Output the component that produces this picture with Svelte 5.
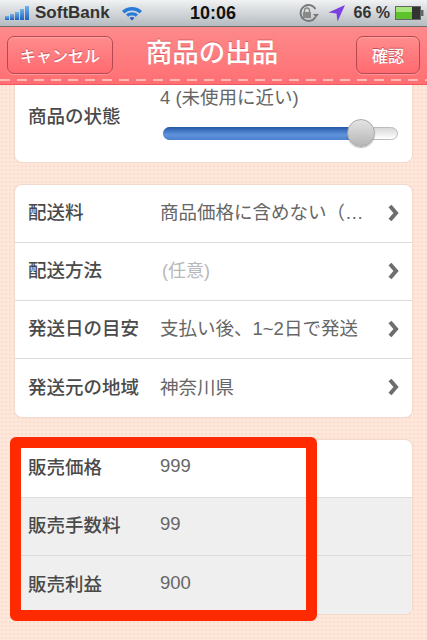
<script lang="ts">
	const shipping = [
		{ label: '配送料', value: '商品価格に含めない（…', muted: false },
		{ label: '配送方法', value: '(任意)', muted: true },
		{ label: '発送日の目安', value: '支払い後、1~2日で発送', muted: false },
		{ label: '発送元の地域', value: '神奈川県', muted: false }
	];
	const prices = [
		{ label: '販売価格', value: '999', grey: false },
		{ label: '販売手数料', value: '99', grey: true },
		{ label: '販売利益', value: '900', grey: true }
	];
</script>

<div class="screen">
	<div class="status">
		<div class="status-left">
			<svg class="signal" width="26" height="15" viewBox="0 0 26 15">
				<defs>
					<linearGradient id="sig" x1="0" y1="0" x2="0" y2="1">
						<stop offset="0" stop-color="#6fb4ea" />
						<stop offset="1" stop-color="#1f62c0" />
					</linearGradient>
				</defs>
				<rect x="0" y="10" width="4" height="4" fill="url(#sig)" />
				<rect x="5" y="8" width="4" height="6" fill="url(#sig)" />
				<rect x="10" y="6" width="4" height="8" fill="url(#sig)" />
				<rect x="15" y="3" width="4" height="11" fill="url(#sig)" />
				<rect x="20" y="0" width="4" height="14" fill="url(#sig)" />
			</svg>
			<span class="carrier">SoftBank</span>
			<svg class="wifi" width="22" height="16" viewBox="0 0 22 16">
				<path d="M1 6 C6 0.5 16 0.5 21 6 L18.5 8.5 C14.5 4.5 7.5 4.5 3.5 8.5 Z" fill="#2a7bd8" />
				<path d="M5 9.5 C8 6.5 14 6.5 17 9.5 L14.8 11.8 C12.8 10 9.2 10 7.2 11.8 Z" fill="#2a7bd8" />
				<path d="M8.6 13 C10 11.8 12 11.8 13.4 13 L11 15.6 Z" fill="#1d5fc0" />
			</svg>
		</div>
		<span class="clock">10:06</span>
		<div class="status-right">
			<svg width="24" height="20" viewBox="0 0 24 20">
				<path d="M19.5 14 A8 8 0 1 1 19.5 6" fill="none" stroke="#777" stroke-width="1.8" />
				<path d="M17 11 L23 11 L20 14.5 Z" fill="#777" />
				<rect x="7" y="9" width="8" height="6" fill="#888" />
				<path d="M8.5 9 V7.5 a2.5 2.5 0 0 1 5 0 V9" fill="none" stroke="#888" stroke-width="1.3" />
			</svg>
			<svg class="arrow" width="18" height="18" viewBox="0 0 18 18">
				<path d="M17 1 L0.5 8.5 L8.5 9.5 L9.5 17.5 Z" fill="#7c3ee0" />
			</svg>
			<span class="pct">66 %</span>
			<svg width="29" height="14" viewBox="0 0 29 14">
				<rect x="0.5" y="0.5" width="25" height="13" fill="#333" stroke="#666" />
				<rect x="1" y="1" width="16" height="12" fill="#5fc12c" />
				<rect x="1" y="1" width="16" height="5" fill="#a5e57a" />
				<rect x="26" y="4" width="2.5" height="6" fill="#666" />
			</svg>
		</div>
	</div>

	<header class="nav">
		<button class="nav-btn cancel">キャンセル</button>
		<h1>商品の出品</h1>
		<button class="nav-btn confirm">確認</button>
		<div class="stitch"></div>
	</header>

	<main class="content">
		<section class="card condition">
			<div class="label">商品の状態</div>
			<div class="condition-body">
				<div class="condition-value">4 (未使用に近い)</div>
				<div class="slider">
					<div class="slider-fill"></div>
					<div class="slider-knob"></div>
				</div>
			</div>
		</section>

		<section class="card">
			{#each shipping as row}
				<div class="row">
					<div class="label">{row.label}</div>
					<div class="value" class:muted={row.muted}>{row.value}</div>
					<svg class="chevron" width="13" height="18" viewBox="0 0 13 18">
						<path d="M3 2 L9 9 L3 16" fill="none" stroke="#6e6e6e" stroke-width="4" />
					</svg>
				</div>
			{/each}
		</section>

		<section class="card">
			{#each prices as row}
				<div class="row" class:grey={row.grey}>
					<div class="label">{row.label}</div>
					<div class="value">{row.value}</div>
				</div>
			{/each}
		</section>
	</main>

	<div class="annotation"></div>
</div>

<style>
	:global(body) {
		margin: 0;
	}

	.screen {
		position: relative;
		width: 427px;
		height: 640px;
		overflow: hidden;
		background-color: #fde6da;
		background-image: radial-gradient(#fbdccd 1px, transparent 1px);
		background-size: 4px 4px;
		font-family: 'Liberation Sans', 'Noto Sans CJK JP', sans-serif;
		color: #555;
	}

	.status {
		display: flex;
		align-items: center;
		justify-content: space-between;
		position: relative;
		height: 27px;
		padding: 0 3px 0 5px;
		box-sizing: border-box;
		background: linear-gradient(#f0f2f3, #b5bbc0);
		border-bottom: 1px solid #6d6d6d;
	}

	.status-left,
	.status-right {
		display: flex;
		align-items: center;
	}

	.carrier {
		margin-left: 4px;
		font-size: 17px;
		font-weight: 700;
		color: #333;
	}

	.wifi {
		margin-left: 11px;
	}

	.clock {
		position: absolute;
		left: 190px;
		top: 3px;
		font-size: 18px;
		font-weight: 700;
		color: #111;
	}

	.arrow {
		margin-left: 8px;
	}

	.pct {
		margin: 0 5px 0 8px;
		font-size: 16px;
		font-weight: 700;
		color: #333;
	}

	.nav {
		display: flex;
		align-items: flex-start;
		justify-content: space-between;
		position: relative;
		height: 58px;
		padding: 9px 7px 0;
		box-sizing: border-box;
		background: linear-gradient(#fd8a8b, #ff6f73);
		border-bottom: 1px solid #f0585c;
	}

	.nav h1 {
		margin: 0;
		position: absolute;
		left: 0;
		right: 3px;
		top: 8px;
		text-align: center;
		font-size: 26.5px;
		line-height: 37px;
		font-weight: 500;
		color: #fff;
		text-shadow: 0 -1px 0 rgba(150, 40, 50, 0.4);
	}

	.nav-btn {
		position: relative;
		z-index: 1;
		height: 38px;
		padding: 0;
		border: 1px solid #b5494f;
		border-radius: 7px;
		background: linear-gradient(#ff8c8d, #ff6a70);
		box-shadow: inset 0 1px 0 rgba(255, 255, 255, 0.2), 0 1px 0 rgba(255, 255, 255, 0.25);
		color: #fff;
		font-family: inherit;
		font-size: 16px;
		font-weight: 500;
		text-shadow: 0 -1px 0 rgba(130, 30, 40, 0.5);
	}

	.cancel {
		width: 106px;
	}

	.confirm {
		width: 64px;
	}

	.stitch {
		position: absolute;
		left: 0;
		right: 0;
		bottom: 3px;
		height: 2px;
		background: repeating-linear-gradient(90deg, #ffb9b5 0 10px, transparent 10px 17px);
	}

	.content {
		display: flex;
		flex-direction: column;
		gap: 23px;
		padding: 0 15px;
	}

	.card {
		background: #fff;
		border-radius: 7px;
		box-shadow: 0 0 0 1px #f3d9cc;
		overflow: hidden;
	}

	.condition {
		display: flex;
		align-items: center;
		height: 77px;
		padding-left: 13px;
		border-radius: 0 0 7px 7px;
	}

	.condition .label {
		margin-top: -17px;
	}

	.condition-body {
		flex: 1;
		align-self: flex-start;
	}

	.condition-value {
		font-size: 18.5px;
		line-height: 24px;
		color: #666;
		margin-top: 1px;
	}

	.slider {
		position: relative;
		width: 235px;
		height: 13px;
		margin: 17px 0 0 3px;
		border: 1px solid #bbb;
		border-radius: 7px;
		background: linear-gradient(#d8d8d8, #fff);
		box-sizing: border-box;
	}

	.slider-fill {
		position: absolute;
		left: -1px;
		top: -1px;
		bottom: -1px;
		width: 190px;
		border-radius: 7px 0 0 7px;
		background: linear-gradient(#2458a8, #5f93db 60%, #4a80cf);
	}

	.slider-knob {
		position: absolute;
		left: 183px;
		top: -9px;
		width: 28px;
		height: 28px;
		box-sizing: border-box;
		border-radius: 50%;
		border: 1px solid #aaa;
		background: linear-gradient(#e4e4e4, #b5b5b5);
		box-shadow: 0 1px 1px rgba(0, 0, 0, 0.25);
	}

	.row {
		display: flex;
		align-items: center;
		height: 58px;
		padding: 0 12px 5px 13px;
		box-sizing: border-box;
		border-top: 1px solid #dcdcdc;
	}

	.row:first-child {
		border-top: 0;
		height: 57px;
	}

	.row:last-child {
		height: 59px;
	}

	.row.grey {
		background: #efefef;
	}

	.label {
		width: 132px;
		flex: none;
		font-size: 18.5px;
		font-weight: 500;
		color: #4a4a4a;
		white-space: nowrap;
	}

	.value {
		flex: 1;
		font-size: 18.5px;
		color: #666;
		white-space: nowrap;
		overflow: hidden;
	}

	.value.muted {
		padding-left: 2px;
		font-size: 18px;
		color: #b8b8b8;
	}

	.chevron {
		flex: none;
		margin-top: 3px;
	}

	.annotation {
		position: absolute;
		left: 10px;
		top: 437px;
		width: 307px;
		height: 184px;
		box-sizing: border-box;
		border: 11px solid #ff2a00;
		border-radius: 6px;
		pointer-events: none;
	}
</style>
